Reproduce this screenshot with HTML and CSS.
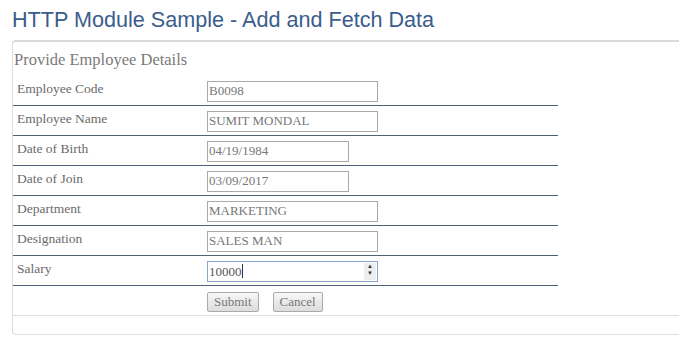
FILE: index.html
```html
<!DOCTYPE html>
<html lang="en">
<head>
    <meta charset="UTF-8">
    <meta name="viewport" content="width=device-width, initial-scale=1.0">
    <title>HTTP Module Sample</title>
    <link rel="stylesheet" href="styles.css">
</head>
<body>
    <h1 class="page-title">HTTP Module Sample - Add and Fetch Data</h1>
    <div class="panel">
        <div class="panel-body">
            <h3 class="panel-title">Provide Employee Details</h3>
            <table class="emp-table">
                <tr>
                    <td class="lbl">Employee Code</td>
                    <td><input type="text" class="txt" value="B0098"></td>
                </tr>
                <tr>
                    <td class="lbl">Employee Name</td>
                    <td><input type="text" class="txt" value="SUMIT MONDAL"></td>
                </tr>
                <tr>
                    <td class="lbl">Date of Birth</td>
                    <td><input type="text" class="txt date" value="04/19/1984"></td>
                </tr>
                <tr>
                    <td class="lbl">Date of Join</td>
                    <td><input type="text" class="txt date" value="03/09/2017"></td>
                </tr>
                <tr>
                    <td class="lbl">Department</td>
                    <td><input type="text" class="txt" value="MARKETING"></td>
                </tr>
                <tr>
                    <td class="lbl">Designation</td>
                    <td><input type="text" class="txt" value="SALES MAN"></td>
                </tr>
                <tr>
                    <td class="lbl">Salary</td>
                    <td>
                        <div class="num-box">
                            <span class="num-val">10000</span><span class="caret"></span>
                            <span class="spin">&#9650;<br>&#9660;</span>
                        </div>
                    </td>
                </tr>
                <tr class="btn-row">
                    <td></td>
                    <td>
                        <button type="button" class="btn">Submit</button>
                        <button type="button" class="btn">Cancel</button>
                    </td>
                </tr>
            </table>
        </div>
        <div class="panel-footer"></div>
    </div>
</body>
</html>
```

FILE: styles.css
```css
body { margin: 0; padding: 0 0 0 12px; overflow: hidden; background: #fff; font-family: "Liberation Serif", serif; }
.page-title { margin: 0; padding-top: 6px; height: 34px; font-family: "Liberation Sans", Arial, sans-serif; font-weight: normal; font-size: 21.6px; line-height: 28px; color: #3a5d8c; }
.panel { width: calc(100% + 6px); border: 1px solid #ddd; border-top: 2px solid #dadada; border-radius: 4px; box-sizing: border-box; }
.panel-body { padding: 0; }
.panel-title { margin: 0; padding: 8px 0 0 1px; height: 26px; font-weight: normal; font-size: 16.5px; line-height: 20px; color: #7a7a7a; }
.emp-table { width: 545px; border-collapse: collapse; }
.emp-table td { height: 28px; padding: 1px 0 0; vertical-align: middle; line-height: 16px; border-bottom: 1px solid #4d6177; }
.emp-table .lbl { width: 190px; height: 26px; padding: 0 0 3px 4px; font-size: 13.5px; color: #6a6a6a; }
.btn-row td { border-bottom: none; }
.txt { display: block; width: 171px; height: 21px; padding: 0 1px; margin: 0; border: 1px solid #a9a9a9; box-sizing: border-box; font-family: "Liberation Serif", serif; font-size: 13px; color: #777; }
.txt.date { width: 142px; }
.num-box { position: relative; width: 171px; height: 21px; border: 1px solid #86a5d0; box-sizing: border-box; padding: 0 1px; font-size: 13px; line-height: 19px; color: #555; }
.caret { display: inline-block; width: 1px; height: 14px; background: #333; vertical-align: -2px; }
.spin { position: absolute; right: 1px; top: 1px; width: 12px; height: 17px; background: #eee; font-size: 6px; line-height: 7px; text-align: center; color: #333; }
.btn { display: inline-block; height: 20px; margin: 1px 10px 0 0; padding: 0 6px; border: 1px solid #aaa; border-radius: 2px; background: linear-gradient(#f7f7f7, #dcdcdc); font-family: "Liberation Serif", serif; font-size: 13px; color: #777; }
.panel-footer { height: 18px; border-top: 1px solid #ddd; }
```
